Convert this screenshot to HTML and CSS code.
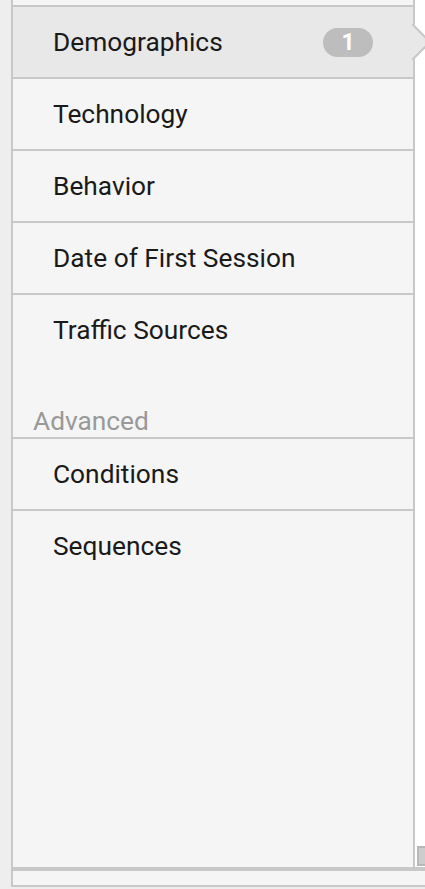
FILE: index.html
```html
<!DOCTYPE html>
<html>
<head>
<meta charset="utf-8">
<link rel="stylesheet" href="styles.css">
</head>
<body>
<div class="frame">
  <div class="top">
    <div class="list">
      <div class="item first selected">
        <span class="label">Demographics</span>
        <span class="badge">1</span>
        <span class="arrow"></span>
      </div>
      <div class="item"><span class="label">Technology</span></div>
      <div class="item"><span class="label">Behavior</span></div>
      <div class="item"><span class="label">Date of First Session</span></div>
      <div class="item last"><span class="label">Traffic Sources</span></div>
      <div class="section">Advanced</div>
      <div class="item"><span class="label">Conditions</span></div>
      <div class="item last"><span class="label">Sequences</span></div>
    </div>
    <div class="track"><div class="thumb"></div></div>
  </div>
  <div class="footer"></div>
</div>
</body>
</html>
```
FILE: styles.css
```css
html, body {
  margin: 0;
  padding: 0;
}
body {
  background: #eeeeee;
  font-family: Roboto, "Noto Sans", sans-serif;
  width: 425px;
  height: 889px;
  overflow: hidden;
}
.frame {
  margin-left: 11px;
  border-left: 2px solid #c8c8c8;
  background: #ffffff;
}
.top {
  display: flex;
  height: 867px;
  border-bottom: 2px solid #c8c8c8;
}
.list {
  width: 400px;
  flex: none;
  border-right: 2px solid #c8c8c8;
  background: #f5f5f5;
  padding-top: 5px;
  box-sizing: content-box;
}
.item {
  position: relative;
  height: 70px;
  border-bottom: 2px solid #c8c8c8;
  display: flex;
  align-items: center;
  justify-content: space-between;
  padding: 0 40px 0 40px;
  font-size: 26.3px;
  color: #1a1a1a;
}
.item.first {
  border-top: 2px solid #c8c8c8;
}
.item.last {
  border-bottom: 2px solid transparent;
}
.item.selected {
  background: #e8e8e8;
}
.badge {
  width: 50px;
  height: 29px;
  border-radius: 15px;
  background: #bdbdbd;
  color: #ffffff;
  font-weight: 700;
  font-size: 23px;
  display: flex;
  align-items: center;
  justify-content: center;
  line-height: 1;
}
.arrow {
  position: absolute;
  left: 387px;
  top: 22px;
  width: 26px;
  height: 26px;
  box-sizing: border-box;
  background: #e8e8e8;
  border-top: 2px solid #c8c8c8;
  border-right: 2px solid #c8c8c8;
  transform: rotate(45deg);
}
.section {
  height: 69px;
  padding-bottom: 1px;
  border-bottom: 2px solid #c8c8c8;
  display: flex;
  align-items: flex-end;
  padding-left: 20px;
  font-size: 26.3px;
  color: #999999;
  line-height: 30px;
}
.track {
  flex: 1;
  display: flex;
  flex-direction: column;
  justify-content: flex-end;
  padding-left: 2px;
  padding-bottom: 1px;
}
.thumb {
  height: 20px;
  box-sizing: border-box;
  background: #cdcdcd;
  border: 2px solid #b8b8b8;
  border-right: none;
}
.footer {
  height: 14px;
  border-top: 2px solid #c8c8c8;
  border-bottom: 2px solid #c8c8c8;
  background: #f5f5f5;
}
```
